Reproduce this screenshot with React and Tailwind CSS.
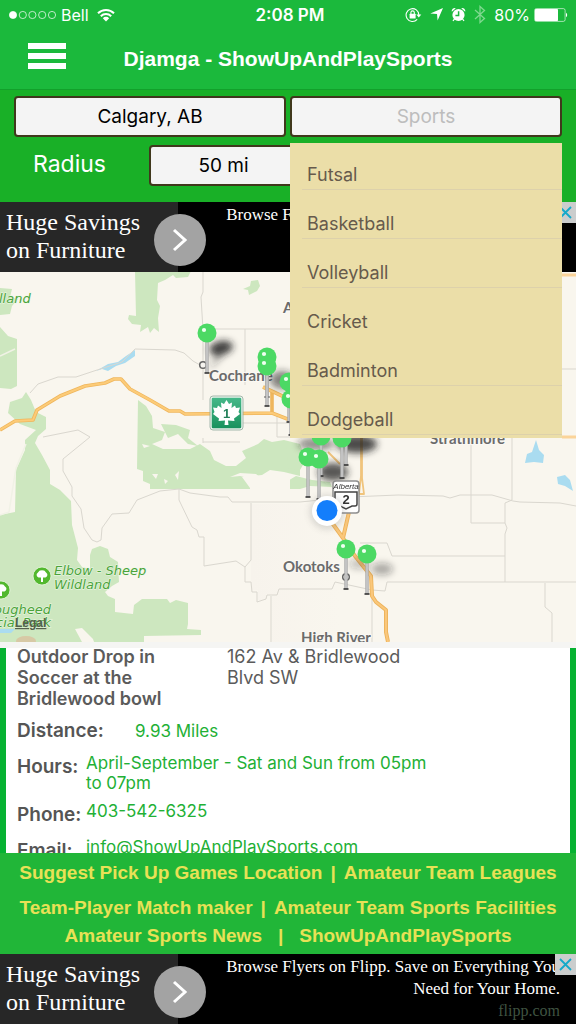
import React from "react";

const SANS = "font-[Inter,'Liberation_Sans',sans-serif]";
const HELV = "font-['Liberation_Sans',Arial,sans-serif]";
const SLAB = "font-['Liberation_Serif',serif]";

const sports = ["Futsal", "Basketball", "Volleyball", "Cricket", "Badminton", "Dodgeball"];

function StatusBar() {
  return (
    <div className={`${SANS} relative flex h-[29px] items-center justify-between pl-[9px] pr-2 text-[16px] leading-5 text-white`}>
      <div className="flex items-center gap-1">
        <svg width="48" height="10" viewBox="0 0 48 10" fill="none" stroke="white" strokeWidth="0.7" aria-hidden="true">
          <circle cx="4" cy="5" r="3.6" fill="white" />
          <circle cx="13.8" cy="5" r="3.6" />
          <circle cx="23.4" cy="5" r="3.6" />
          <circle cx="33.2" cy="5" r="3.6" />
          <circle cx="43" cy="5" r="3.6" />
        </svg>
        <span>Bell</span>
        <svg className="ml-1" width="18" height="14" viewBox="0 0 18 14" fill="none" stroke="white" strokeWidth="2" aria-hidden="true">
          <path d="M1 5.2a11.3 11.3 0 0 1 16 0" />
          <path d="M3.8 8.2a7.4 7.4 0 0 1 10.4 0" />
          <path d="M9 13.4 5.8 10.2a4.5 4.5 0 0 1 6.4 0Z" fill="white" stroke="none" />
        </svg>
      </div>
      <span className="absolute left-1/2 -translate-x-1/2 pl-1 text-[17px] font-semibold">2:08 PM</span>
      <div className="flex items-center gap-2">
        <svg width="17" height="16" viewBox="0 0 17 16" fill="none" stroke="white" aria-hidden="true">
          <path d="M12.2 12.4A6.4 6.4 0 1 1 13.9 8" strokeWidth="1.1" />
          <path d="M11.3 7.4h5l-2.5 3z" fill="white" stroke="none" />
          <rect x="4.6" y="6.8" width="6" height="4.6" rx="0.5" fill="white" stroke="none" />
          <path d="M5.9 7V5.6a1.7 1.7 0 0 1 3.4 0V7" strokeWidth="1.1" />
        </svg>
        <svg width="13" height="13" viewBox="0 0 13 13" fill="white" aria-hidden="true">
          <path d="M13 0 7.6 12.5 7 6 0.3 5.4Z" />
        </svg>
        <svg width="15" height="15" viewBox="0 0 15 15" fill="white" aria-hidden="true">
          <circle cx="7.5" cy="8" r="6.1" />
          <path d="M0.8 4.8a3 3 0 0 1 4-3.6ZM14.2 4.8a3 3 0 0 0-4-3.6Z" />
          <path d="m3.4 12-1.4 2M11.6 12l1.4 2" stroke="white" strokeWidth="1.3" />
          <path d="M7.6 4.2v4.2H4.4" fill="none" stroke="#1bb93c" strokeWidth="1.5" />
        </svg>
        <svg width="12" height="19" viewBox="0 0 12 19" fill="none" stroke="#7fd98f" strokeWidth="1.3" aria-hidden="true">
          <path d="m1 5 9.5 8.5L6 17.5v-16l4.5 4L1 14" />
        </svg>
        <span>80%</span>
        <svg className="-ml-1" width="34" height="14" viewBox="0 0 34 14" aria-hidden="true">
          <rect x="0.6" y="0.6" width="30.5" height="12.8" rx="1.8" fill="none" stroke="white" strokeWidth="0.6" />
          <rect x="1" y="1" width="23" height="12" rx="0.8" fill="white" />
          <path d="M32 4.8a2.6 2.6 0 0 1 0 4.4Z" fill="white" />
        </svg>
      </div>
    </div>
  );
}

function Header() {
  return (
    <header className="shrink-0 border-b border-[#12a02b] bg-[#1bb93c]">
      <StatusBar />
      <div className="relative flex h-[60px] items-center justify-center">
        <button type="button" aria-label="Menu" className="absolute left-7 top-[14px] flex flex-col gap-1">
          <span className="block h-[6px] w-[38px] bg-white" />
          <span className="block h-[6px] w-[38px] bg-white" />
          <span className="block h-[6px] w-[38px] bg-white" />
        </button>
        <h1 className={`${HELV} text-[21px] font-bold leading-7 text-white`}>Djamga - ShowUpAndPlaySports</h1>
      </div>
    </header>
  );
}

function SearchForm() {
  const field =
    "block h-[41px] w-full rounded-[4px] border-2 border-[#40381c] bg-[#f4f4f4] text-center text-[19px] text-black placeholder:text-[#bdbdbd]";
  return (
    <form className={`${SANS} flex h-28 shrink-0 flex-col gap-2 bg-[#19b027] px-[14px] pt-[6px]`}>
      <div className="grid grid-cols-2 gap-1">
        <input aria-label="City" className={field} defaultValue="Calgary, AB" />
        <div className="relative">
          <input aria-label="Sports" className={field} placeholder="Sports" />
          <ul className="absolute inset-x-0 top-[47px] z-20 h-[295px] overflow-hidden bg-[#ebdea8]">
            {sports.map((s) => (
              <li
                key={s}
                className={`ml-3 h-[49px] border-b first:h-[47px] ${s === "Cricket" ? "border-transparent" : "border-[#ddd1ab]"}`}
              >
                <button
                  type="button"
                  className="flex h-full w-full items-end pb-[2px] pl-[5px] text-left text-[18px] leading-6 text-[#665a4c]"
                >
                  {s}
                </button>
              </li>
            ))}
          </ul>
        </div>
      </div>
      <div className="flex items-start">
        <label htmlFor="radius" className="w-[135px] pl-[19px] pt-[5px] text-[23px] leading-7 text-white">
          Radius
        </label>
        <div className="w-[149px]">
          <input id="radius" className={field} defaultValue="50 mi" />
        </div>
      </div>
    </form>
  );
}

function AdBanner() {
  return (
    <aside className={`${SLAB} relative flex h-[70px] shrink-0 bg-black text-white`}>
      <div className="w-[178px] shrink-0 bg-[#272727] pl-[6px] pt-[6px] text-[24px] leading-7">
        Huge Savings
        <br />
        on Furniture
      </div>
      <div className="flex-1 pr-4 pt-[2px] text-right text-[17px] leading-[22px]">
        <p className="ml-auto w-[345px]">Browse Flyers on Flipp. Save on Everything You Need for Your Home.</p>
        <p className="text-[16px] text-[#3f5340]">flipp.com</p>
      </div>
      <button
        type="button"
        aria-label="Open offer"
        className="absolute left-[154px] top-3 flex size-[52px] items-center justify-center rounded-full bg-[#a3a3a3]"
      >
        <svg width="16" height="24" viewBox="0 0 16 24" fill="none" stroke="white" strokeWidth="3" aria-hidden="true">
          <path d="m2 2 11 10L2 22" />
        </svg>
      </button>
      <button
        type="button"
        aria-label="Close ad"
        className="absolute right-0 top-0 flex h-[21px] w-[21px] items-center justify-center bg-[#cbcdcd]"
      >
        <svg width="13" height="13" viewBox="0 0 13 13" stroke="#14a9c9" strokeWidth="1.8" aria-hidden="true">
          <path d="m1 1 11 11M12 1 1 12" />
        </svg>
      </button>
    </aside>
  );
}

function Pin({ x, y, len = 38 }) {
  return (
    <g transform={`translate(${x} ${y})`}>
      <rect x="-1.7" y="7" width="3.4" height={len - 5} fill="#aaa" />
      <rect x="-0.5" y="7" width="1" height={len - 5} fill="#dcdcdc" />
      <path d={`M-2.5 ${len + 2}h5`} stroke="#333" strokeWidth="1.6" />
      <circle r="9.5" fill="#4cd964" />
      <circle cx="-3" cy="-3" r="2.1" fill="#effff1" />
    </g>
  );
}

function TreeBadge({ x, y }) {
  return (
    <g transform={`translate(${x} ${y})`}>
      <circle r="9" fill="#52b82e" stroke="#eaf6e0" strokeWidth="0.8" />
      <path
        d="M-1 6V1.5h-2.5A2.8 2.8 0 0 1-4-3.6 4 4 0 0 1 0-5.6a4 4 0 0 1 4 2 2.8 2.8 0 0 1-.5 5.1H1V6Z"
        fill="white"
      />
    </g>
  );
}

function SportsMap() {
  return (
    <svg
      className="block h-[370px] w-full shrink-0"
      viewBox="0 272 576 370"
      preserveAspectRatio="xMidYMid slice"
      role="img"
      aria-label="Map of pick up games around Calgary"
    >
      <defs>
        <filter id="blur" x="-50%" y="-50%" width="200%" height="200%">
          <feGaussianBlur stdDeviation="3.5" />
        </filter>
        <linearGradient id="shield" x1="0" y1="0" x2="0" y2="1">
          <stop offset="0" stopColor="#47b98a" />
          <stop offset="1" stopColor="#17905c" />
        </linearGradient>
        <linearGradient id="urban" x1="0" y1="0" x2="1" y2="0">
          <stop offset="0" stopColor="#f7f3ec" />
          <stop offset="1" stopColor="#f9f6ee" />
        </linearGradient>
      </defs>
      <rect y="271" width="576" height="371" fill="#f9f6ee" />
      <path d="M251 504H340V642H272V594H266V600H258V590H251Z" fill="url(#urban)" />

      <g fill="#cde7bf">
        <path d="M135 271H191L188 277 176 278 173 275 165 280 158 283 157 300 160 306 158 318 159 332 154 328 150 333 148 327 140 332 141 325 132 324 128 319 129 315 136 316Z" />
        <path d="M243 289 250 286 251 281 258 280 260 286 257 291 249 295 248 290Z" />
        <path d="M0 288 12 289 10 297 18 299 12 306 10 314 0 315Z" />
        <path d="M0 327 8 336 17 339V386L11 389 0 388Z" />
        <path d="M26 392 31 400 36 412 46 417V429L38 436 35 443 42 455 50 470V484L60 490 71 501 72 525 78 548 77 560 82 567 90 569V555L92 549 100 546 108 549 110 557 118 562 119 582 112 586 105 592 108 596 115 599V612L133 614 134 605 142 599H167L170 603 176 600 188 603V624L187 629 201 630V635L144 636V642H0V515L15 512 16 470 25 450V440L36 430 20 424 8 413 10 402 22 398Z" />
        <path d="M138 400 146 406 152 416 153 428 165 432 162 440 152 444 163 449 190 449 200 444 210 451 214 460 226 466 236 466 246 458 242 451 258 444 264 439 272 442 284 440 300 444V476L284 472 270 470 262 475 242 477 250 488V489H150V484L143 481V471L137 469Z" />
        <path d="M161 424 176 425 190 430 188 438 198 446 188 444 178 434 168 438Z" />
        <path d="M286 482 296 476 312 480 330 482 332 487 310 486 300 489H284Z" />
        <path d="M286 446 300 444 306 460 300 470 288 468Z" />
      </g>
      <g fill="#f9f6ee">
        <path d="M75 629 82 628 93 639 94 642H82Z" />
        <path d="M152 474 158 474 156 479ZM164 479 168 481 165 484ZM175 475 179 471 178 480Z" />
        <path d="M142 444 150 446 144 448ZM230 477 240 473 256 474 262 479 252 479 240 476Z" />
        <path d="M250 478 270 474 282 480 290 478V490H268L254 486Z" />
      </g>
      <path d="M0 356 15 349M0 515 9 512 14 480 16 468 26 444" fill="none" stroke="#f1f2e6" strokeWidth="1.5" />

      <g fill="#aadcf0">
        <path d="M96 371 108 364 118 362 126 356 135 350V356L125 363 116 366 108 371 102 369Z" />
        <path d="M525 463 527 454 532 452 536 440 539 450 544 455 543 463 534 462Z" />
        <path d="M557 477 565 475 570 480 573 491 565 486 558 484Z" />
        <path d="M0 629H15L11 633H0Z" />
      </g>
      <ellipse cx="26" cy="641" rx="10" ry="5" fill="#d7c9a5" />

      <g fill="none" stroke="#dad7cf" strokeWidth="1">
        <path d="M30 393 38 384 58 377 76 377 94 371 122 362 135 349 175 350 184 353 193 361 200 365M203 271V292L201 297 203 330V400M203 329H290M245 329V385M242 423H290M277 413V437H290" />
        <path d="M43 437 78 430 90 437 63 459V471L72 487V496L81 509 84 528 92 540 97 542 101 540 102 528 112 514 129 513 137 500 160 491 179 489 190 493 220 497 228 497 232 502H300M179 489V500L192 527 197 530 199 537H204V566L236 561 245 567 251 560V503M245 567V582H251L252 592H257V602L266 599 267 595H277L279 589H332L335 582 372 590 385 591 387 582H576M271 596V642" />
        <path d="M300 502 350 497 398 495 443 496 450 498 460 495H492L513 501 520 502 560 503 576 506M471 438V523H505M512 438V500L505 503V523L507 528 505 534V582M360 543H387L392 556H505M372 582V642M545 583V607L552 613V642M562 369H576M203 438V443M203 442H240" />
      </g>

      <g fill="none" strokeLinejoin="round">
        <path
          d="M0 430 15 421 33 420 37 410 60 396 85 386 105 383 114 379H121L130 389 150 400 169 411H180L185 414 272 413 290 420M263 387 295 402M272 392V413"
          stroke="#efb65c"
          strokeWidth="3.6"
        />
        <path
          d="M0 430 15 421 33 420 37 410 60 396 85 386 105 383 114 379H121L130 389 150 400 169 411H180L185 414 272 413 290 420M263 387 295 402"
          stroke="#fccb78"
          strokeWidth="2"
        />
        <path d="M562 275H576M562 437H576" stroke="#fbd49a" strokeWidth="3" />
        <path d="M361 436V476L359 494H364L362 478V436M328 452 340 464" stroke="#f0c47c" strokeWidth="1.8" />
        <path d="M330 520 343 538 349 512M343 538 355 556 371 576 372 596 376 602 386 610V632L388 642" stroke="#edb35a" strokeWidth="4" />
        <path d="M330 520 343 538 349 512M343 538 355 556 371 576 372 596 376 602 386 610V632L388 642" stroke="#fac77b" strokeWidth="2.2" />
      </g>

      <g
        className="font-['DejaVu_Sans',sans-serif] italic"
        fill="#4ba33b"
        stroke="#eef8e6"
        strokeWidth="1"
        paintOrder="stroke"
        fontSize="13"
      >
        <text x="-1" y="303">lland</text>
        <text x="54" y="575">Elbow - Sheep</text>
        <text x="54" y="589">Wildland</text>
        <text x="-6" y="614">ougheed</text>
        <text x="-4" y="627">cial Park</text>
      </g>
      <TreeBadge x={42} y={576} />
      <TreeBadge x={1} y={590} />
      <text x="15" y="627" className="font-['Liberation_Sans',sans-serif] font-bold" fontSize="12" fill="#55614e" textDecoration="underline">
        Legal
      </text>

      <g className="font-['Lato',sans-serif] font-bold" fill="#6b6b6b" stroke="#fbf9f4" strokeWidth="2" paintOrder="stroke" fontSize="15">
        <text x="283" y="313">Airdrie</text>
        <text x="209" y="381">Cochrane</text>
        <text x="430" y="444">Strathmore</text>
        <text x="283" y="572">Okotoks</text>
        <text x="301" y="643">High River</text>
      </g>
      <g fill="#f6f4ef" stroke="#666" strokeWidth="1.5">
        <circle cx="203" cy="365" r="3.3" />
        <circle cx="346" cy="577" r="3.3" />
      </g>

      <g filter="url(#blur)" fill="#222">
        <ellipse cx="221" cy="348" rx="12" ry="7" opacity="0.85" transform="rotate(-12 221 348)" />
        <path d="M209 370 217 352 223 356Z" opacity="0.4" />
        <ellipse cx="282" cy="380" rx="12" ry="9" opacity="0.55" />
        <ellipse cx="357" cy="444" rx="20" ry="9" opacity="0.8" />
        <ellipse cx="333" cy="472" rx="15" ry="9" opacity="0.75" />
        <ellipse cx="316" cy="444" rx="18" ry="6" opacity="0.5" />
        <ellipse cx="382" cy="569" rx="11" ry="6" opacity="0.35" />
        <ellipse cx="359" cy="564" rx="10" ry="5" opacity="0.25" />
      </g>

      <g>
        <rect x="211" y="397" width="31" height="32" rx="2" fill="url(#shield)" stroke="#e9f3ec" strokeWidth="1.5" />
        <rect x="210" y="396" width="33" height="34" rx="3" fill="none" stroke="#90a99c" strokeWidth="0.8" />
        <path
          d="M226.5 400 229 404 232 402.5 231.5 408 235 405.5 236 408 240 407.5 238.5 412 240 414 234 418.5 234.5 421 228 420.5 228.5 425H224.5L225 420.5 218.5 421 219 418.5 213 414 214.5 412 213 407.5 217 408 218 405.5 221.5 408 221 402.5 224 404Z"
          fill="white"
        />
        <text x="226.5" y="418" textAnchor="middle" className="font-['Liberation_Sans',sans-serif] font-bold" fontSize="13" fill="#23805a">
          1
        </text>
      </g>

      <Pin x={207} y={333} />
      <Pin x={267} y={357} />
      <Pin x={267} y={366} />
      <Pin x={289} y={382} />
      <Pin x={291} y={399} len={34} />
      <Pin x={346} y={425} />
      <Pin x={321} y={436} />
      <Pin x={342} y={438} />
      <g>
        <rect x="333" y="481" width="26" height="32" rx="3" fill="white" stroke="#8e8e8e" strokeWidth="1.5" />
        <text x="346" y="489" textAnchor="middle" className="font-['Liberation_Sans',sans-serif] italic" fontSize="8" fill="#333">
          Alberta
        </text>
        <path d="M335 492H357V504Q357 506 355 506H352L346 509 340 506H337Q335 506 335 504Z" fill="white" stroke="#444" strokeWidth="1.5" />
        <text x="346" y="504" textAnchor="middle" className="font-['Liberation_Sans',sans-serif] font-bold" fontSize="13" fill="#333">
          2
        </text>
      </g>
      <Pin x={308} y={457} />
      <Pin x={319} y={459} />
      <Pin x={346} y={549} />
      <Pin x={367} y={554} />
      <circle cx="327" cy="512" r="17" fill="#555" opacity="0.2" filter="url(#blur)" />
      <circle cx="327" cy="511" r="15" fill="white" />
      <circle cx="327" cy="510.5" r="10.5" fill="#147efb" />
    </svg>
  );
}

function Detail({ label, wide, children }) {
  return (
    <div className="flex">
      <dt className={`shrink-0 text-[19px] font-semibold leading-7 text-[#555] ${wide ? "w-[118px]" : "w-[69px]"}`}>{label}</dt>
      <dd className={`w-[345px] text-[17px] text-[#22b035] ${wide ? "leading-7" : "leading-5"}`}>{children}</dd>
    </div>
  );
}

function EventCard() {
  return (
    <section className={`${SANS} min-h-0 flex-1 overflow-hidden border-x-[6px] border-[#06b232] bg-white`}>
      <article className="-mt-[2px] flex flex-col gap-2 pl-[11px]">
        <div className="flex text-[18px] leading-[21px] text-[#5b5b5b]">
          <h2 className="w-[210px] pr-10 font-semibold">Outdoor Drop in Soccer at the Bridlewood bowl</h2>
          <address className="w-[200px] not-italic">162 Av &amp; Bridlewood Blvd SW</address>
        </div>
        <dl className="flex flex-col gap-2">
          <Detail label="Distance:" wide>
            9.93 Miles
          </Detail>
          <Detail label="Hours:">April-September - Sat and Sun from 05pm to 07pm</Detail>
          <Detail label="Phone:">403-542-6325</Detail>
          <Detail label="Email:">
            <a href="mailto:info@ShowUpAndPlaySports.com">info@ShowUpAndPlaySports.com</a>
          </Detail>
        </dl>
      </article>
    </section>
  );
}

function FooterLinks() {
  return (
    <nav className={`${HELV} flex h-[101px] shrink-0 flex-col whitespace-nowrap bg-[#21b638] text-[19px] font-bold text-[#e8e156]`}>
      <div className="flex h-10 items-center justify-center gap-2">
        <a href="#suggest">Suggest Pick Up Games Location</a>
        <span>|</span>
        <a href="#leagues">Amateur Team Leagues</a>
      </div>
      <div className="flex h-[30px] items-center justify-center gap-2">
        <a href="#match">Team-Player Match maker</a>
        <span>|</span>
        <a href="#facilities">Amateur Team Sports Facilities</a>
      </div>
      <div className="flex h-[26px] items-center justify-center gap-4">
        <a href="#news">Amateur Sports News</a>
        <span>|</span>
        <a href="#home">ShowUpAndPlaySports</a>
      </div>
    </nav>
  );
}

export default function App() {
  return (
    <main className="flex h-screen flex-col overflow-hidden bg-[#19b027]">
      <Header />
      <SearchForm />
      <AdBanner />
      <SportsMap />
      <div className="h-[6px] shrink-0 bg-[#f5f5f3]" />
      <EventCard />
      <FooterLinks />
      <AdBanner />
    </main>
  );
}
